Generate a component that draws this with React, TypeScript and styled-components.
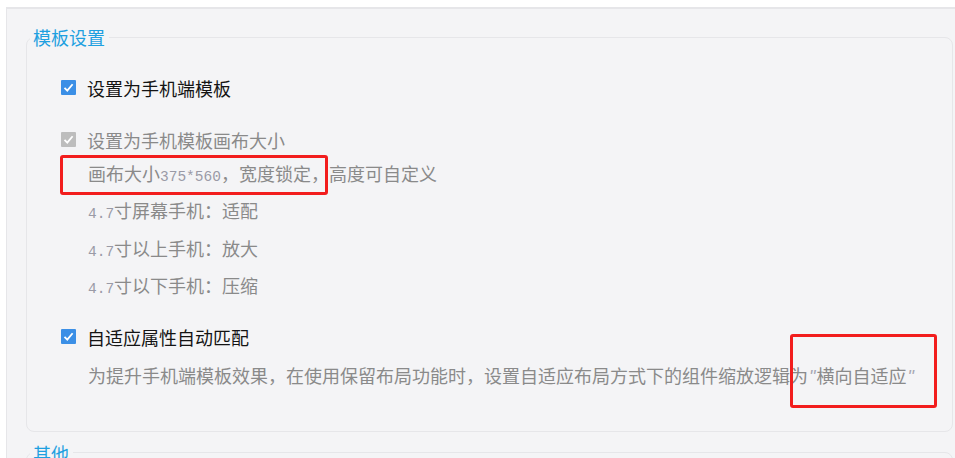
import * as React from "react";
import styled, { createGlobalStyle } from "styled-components";

const GlobalStyle = createGlobalStyle`
  html, body {
    margin: 0;
    padding: 0;
    background: #ffffff;
  }
  body {
    font-family: "Noto Sans CJK SC", "Noto Sans", sans-serif;
    overflow: hidden;
  }
`;

const Panel = styled.div`
  margin: 7px 0 0 6px;
  height: calc(100vh - 7px);
  overflow: hidden;
  background: #f4f4f6;
  border-top: 2px solid #e6e6e9;
  border-left: 1px solid #e6e6e9;
  padding: 16px 2px 0 19px;
  box-sizing: border-box;
`;

const Group = styled.fieldset`
  margin: 0;
  padding: 0 0 36px 0;
  border: 1px solid #e6e6e9;
  border-radius: 8px;
  min-width: 0;
  & + & {
    margin-top: 9px;
  }
`;

const Legend = styled.legend`
  padding: 0 4px 0 3px;
  margin-left: 3px;
  font-size: 18px;
  line-height: 24px;
  color: #1ea0e0;
`;

const Body = styled.div`
  padding: 22px 0 0 34px;
`;

const Section = styled.div<{ $gap?: number }>`
  display: flex;
  flex-direction: column;
  margin-top: ${(p) => p.$gap ?? 0}px;
`;

const Row = styled.div<{ $indent?: boolean; $tone?: "dark" | "gray"; $check?: boolean }>`
  position: relative;
  display: flex;
  align-items: center;
  height: ${(p) => (p.$check ? "33px" : "37.5px")};
  padding-left: ${(p) => (p.$indent ? "27px" : "0")};
  font-size: 18px;
  color: ${(p) => (p.$tone === "gray" ? "#8a8a8a" : "#141414")};
  white-space: nowrap;
`;

const Note = styled(Row)`
  margin-top: 4px;
`;

const Label = styled.span`
  line-height: 24px;
`;

const Box = styled.span<{ $disabled?: boolean }>`
  display: inline-flex;
  align-items: center;
  justify-content: center;
  width: 15px;
  height: 15px;
  margin-right: 11px;
  border-radius: 1px;
  background: ${(p) => (p.$disabled ? "#bdbdbd" : "#3b8fe6")};
  flex-shrink: 0;
`;

const Num = styled.span`
  font-family: "Liberation Mono", "DejaVu Sans Mono", monospace;
  font-size: 14.5px;
  color: #9a9aa6;
`;

const Quote = styled.span`
  font-family: "Liberation Sans", "DejaVu Sans", sans-serif;
  font-style: italic;
  color: #a8a8b4;
  padding: 0 1px;
`;

const Mark = styled.span<{ $w: number; $h: number; $x: number; $y: number }>`
  position: absolute;
  left: ${(p) => p.$x}px;
  top: ${(p) => p.$y}px;
  width: ${(p) => p.$w}px;
  height: ${(p) => p.$h}px;
  border: 3px solid #f21d1d;
  border-radius: 3px;
  box-sizing: border-box;
  pointer-events: none;
`;

const Check: React.FC<{ disabled?: boolean }> = ({ disabled }) => (
  <Box $disabled={disabled}>
    <svg width="11" height="11" viewBox="0 0 11 11">
      <path d="M1.5 5.8 L4.3 8.6 L9.6 2.2" fill="none" stroke="#fff" strokeWidth="1.8" />
    </svg>
  </Box>
);

export default function App() {
  return (
    <>
      <GlobalStyle />
      <Panel>
        <Group>
          <Legend>模板设置</Legend>
          <Body>
            <Section>
              <Row $check>
                <Check />
                <Label>设置为手机端模板</Label>
              </Row>
            </Section>
            <Section $gap={19}>
              <Row $check $tone="gray">
                <Check disabled />
                <Label>设置为手机模板画布大小</Label>
              </Row>
              <Row $indent $tone="gray">
                <Label>
                  画布大小<Num>375*560</Num>，宽度锁定，高度可自定义
                </Label>
                <Mark $x={-1} $y={-1} $w={268} $h={40} />
              </Row>
              <Row $indent $tone="gray">
                <Label>
                  <Num>4.7</Num>寸屏幕手机：适配
                </Label>
              </Row>
              <Row $indent $tone="gray">
                <Label>
                  <Num>4.7</Num>寸以上手机：放大
                </Label>
              </Row>
              <Row $indent $tone="gray">
                <Label>
                  <Num>4.7</Num>寸以下手机：压缩
                </Label>
              </Row>
            </Section>
            <Section $gap={14}>
              <Row $check>
                <Check />
                <Label>自适应属性自动匹配</Label>
              </Row>
              <Note $indent $tone="gray">
                <Label>
                  为提升手机端模板效果，在使用保留布局功能时，设置自适应布局方式下的组件缩放逻辑为<Quote>"</Quote>横向自适应<Quote>"</Quote>
                </Label>
                <Mark $x={729} $y={-23} $w={147} $h={74} />
              </Note>
            </Section>
          </Body>
        </Group>
        <Group>
          <Legend>其他</Legend>
        </Group>
      </Panel>
    </>
  );
}
